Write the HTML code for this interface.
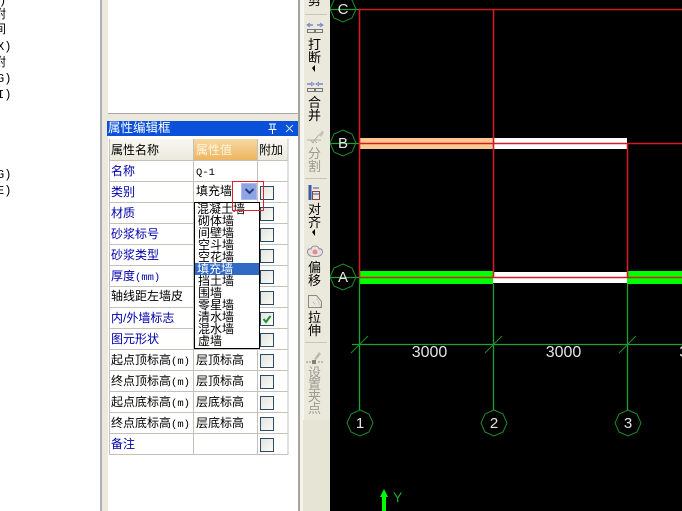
<!DOCTYPE html>
<html><head><meta charset="utf-8">
<style>
html,body{margin:0;padding:0;width:682px;height:511px;overflow:hidden;background:#fff}
*{box-sizing:border-box}
body{position:relative;font-family:"Liberation Sans","Noto Sans CJK SC",sans-serif;font-size:12px;color:#000}
div,span{position:absolute}
i{font-style:normal;font-family:"Liberation Mono",monospace;font-size:10.500px}
.lf{left:-6px;line-height:14px;white-space:nowrap;font-family:"Liberation Mono","Noto Sans CJK SC",monospace;font-size:12px}
.c{height:21px;line-height:21px;white-space:nowrap;overflow:hidden}
.n{left:111px;width:81px}
.v{left:196px;width:60px}
.b{color:#0000a8}
.k{left:260px;width:14px;height:14px;border:1.5px solid #2a4a66;background:linear-gradient(135deg,#e4e4dc,#fbfbf8)}
.tb{left:301px;width:27px;text-align:center;font-size:13px;line-height:12.5px}
.g{color:#9a9a92}
.dd{left:198px;width:60px;height:12px;line-height:12px;white-space:nowrap;font-size:12px}
</style></head><body>
<span class="lf" style="top:-6px;left:-1px">)</span>
<span class="lf" style="top:8px">附</span>
<span class="lf" style="top:23px">间</span>
<span class="lf" style="top:40px;left:-3px">X)</span>
<span class="lf" style="top:56px">附</span>
<span class="lf" style="top:72px;left:-3px">G)</span>
<span class="lf" style="top:88px;left:-3px">I)</span>
<span class="lf" style="top:168px;left:-3px">G)</span>
<span class="lf" style="top:184px;left:-3px">E)</span>

<div style="left:100px;top:0;width:2px;height:511px;background:#aab0b8"></div>
<div style="left:102px;top:0;width:198px;height:511px;background:#ece9dc"></div>
<div style="left:108px;top:0;width:190px;height:114px;background:#fff;border-bottom:1px solid #a8a8a8"></div>
<div style="left:107px;top:121px;width:191px;height:15px;background:#0a50d8"></div>
<div style="left:108px;top:120px;color:#fff;font-size:12.5px;line-height:16px;white-space:nowrap">属性编辑框</div>
<svg style="position:absolute;left:266px;top:123px" width="32" height="12"><path d="M3 1h7M5 1v5M8 1v5M2.500 6.500h8M6.500 7v4" stroke="#fff" fill="none"/><path d="M20 2l7 7M27 2l-7 7" stroke="#cfe0ff" fill="none"/></svg>
<div style="left:108px;top:136px;width:190px;height:375px;background:#fff"></div>
<div style="left:298px;top:0;width:2px;height:511px;background:#a3a3a0"></div>
<div style="left:300px;top:0;width:3px;height:511px;background:#f4f3ec"></div>

<!-- table -->
<div style="left:109px;top:139px;width:84px;height:21px;background:linear-gradient(#f8f8f2,#ebe9dc)"></div>
<div style="left:193px;top:139px;width:64px;height:21px;background:linear-gradient(#f6d9a2,#eeb560)"></div>
<div style="left:257px;top:139px;width:31px;height:21px;background:linear-gradient(#f8f8f2,#ebe9dc)"></div>
<svg style="position:absolute;left:109px;top:139px" width="180" height="316">
<g stroke="#c4c0bc" stroke-width="1" fill="none">
<path d="M0 21.500H179M0 42.500H179M0 63.500H179M0 84.500H179M0 105.500H179M0 126.500H179M0 147.500H179M0 168.500H179M0 189.500H179M0 210.500H179M0 231.500H179M0 252.500H179M0 273.500H179M0 294.500H179M0 315.500H179"/>
<path d="M.5 0V316M84.500 0V316M148.500 0V316M179 0V316"/>
</g></svg>
<div class="c n" style="top:140px">属性名称</div>
<div class="c v" style="top:140px;color:#fff6e0">属性值</div>
<div class="c" style="left:259px;top:140px">附加</div>
<div class="c n b" style="top:161px">名称</div><div class="c v" style="top:161px"><i>Q-1</i></div>
<div class="c n b" style="top:182px">类别</div><div class="c v" style="top:181px">填充墙</div>
<div class="c n b" style="top:203px">材质</div>
<div class="c n b" style="top:224px">砂浆标号</div>
<div class="c n b" style="top:245px">砂浆类型</div>
<div class="c n b" style="top:266px">厚度<i>(mm)</i></div>
<div class="c n" style="top:286px">轴线距左墙皮</div>
<div class="c n b" style="top:308px">内/外墙标志</div>
<div class="c n b" style="top:329px">图元形状</div>
<div class="c n" style="top:350px">起点顶标高<i>(m)</i></div><div class="c v" style="top:350px">层顶标高</div>
<div class="c n" style="top:371px">终点顶标高<i>(m)</i></div><div class="c v" style="top:371px">层顶标高</div>
<div class="c n" style="top:392px">起点底标高<i>(m)</i></div><div class="c v" style="top:392px">层底标高</div>
<div class="c n" style="top:413px">终点底标高<i>(m)</i></div><div class="c v" style="top:413px">层底标高</div>
<div class="c n b" style="top:434px">备注</div>
<div class="k" style="top:186px"></div><div class="k" style="top:207px"></div><div class="k" style="top:228px"></div><div class="k" style="top:249px"></div><div class="k" style="top:270px"></div><div class="k" style="top:291px"></div>
<div class="k" style="top:312px"></div><div class="k" style="top:333px"></div><div class="k" style="top:354px"></div><div class="k" style="top:375px"></div><div class="k" style="top:396px"></div><div class="k" style="top:417px"></div><div class="k" style="top:438px"></div>
<svg style="position:absolute;left:261px;top:313px" width="12" height="12"><path d="M2.500 6l2.500 3 4.500-6" stroke="#20902c" stroke-width="2" fill="none"/></svg>

<!-- combo button -->
<div style="left:241px;top:183px;width:16px;height:17px;background:#8ea4e4;border:1px solid #a9b9ea"></div>
<svg style="position:absolute;left:244px;top:187px" width="11" height="9"><path d="M1.500 2l4 4 4-4" stroke="#24407c" stroke-width="2" fill="none"/></svg>

<!-- dropdown -->
<div style="left:194px;top:202px;width:66px;height:147px;background:#fff;border:1px solid #000;overflow:hidden"></div>
<div style="left:195px;top:263px;width:64px;height:12px;background:#316ac5"></div>
<div class="dd" style="top:203px;left:197px">混凝土墙</div>
<div class="dd" style="top:215px">砌体墙</div>
<div class="dd" style="top:227px">间壁墙</div>
<div class="dd" style="top:239px">空斗墙</div>
<div class="dd" style="top:251px">空花墙</div>
<div class="dd" style="top:263px;left:197px;color:#fff">填充墙</div>
<div class="dd" style="top:275px">挡土墙</div>
<div class="dd" style="top:287px">围墙</div>
<div class="dd" style="top:299px">零星墙</div>
<div class="dd" style="top:311px">清水墙</div>
<div class="dd" style="top:323px">混水墙</div>
<div class="dd" style="top:335px">虚墙</div>
<div style="left:232px;top:181px;width:32px;height:30px;border:1px solid #e02030"></div>

<!-- toolbar -->
<div style="left:303px;top:0;width:27px;height:511px;background:#ebe9dc"></div>
<div style="left:303px;top:420px;width:27px;height:91px;background:#e6e4d4"></div>
<div style="left:303px;top:0;width:1px;height:420px;background:#f8f8f2"></div>
<div class="tb" style="top:-5px">剪</div>
<div style="left:305px;top:14px;width:22px;height:1px;background:#c8c6b8"></div>
<div class="tb" style="top:39px">打<br>断</div>
<div class="tb" style="top:97px">合<br>并</div>
<div class="tb g" style="top:148px">分<br>割</div>
<div style="left:305px;top:178px;width:22px;height:1px;background:#c8c6b8"></div>
<div class="tb" style="top:204px">对<br>齐</div>
<div class="tb" style="top:262px">偏<br>移</div>
<div class="tb" style="top:312px">拉<br>伸</div>
<div style="left:305px;top:342px;width:22px;height:1px;background:#c8c6b8"></div>
<div class="tb g" style="top:367px;line-height:12px">设<br>置<br>夹<br>点</div>
<svg style="position:absolute;left:303px;top:0" width="27" height="420">
<g fill="none">
<path d="M5 25h5M14 25h5" stroke="#7a88c8" stroke-width="1.500"/><path d="M7 23l-3 2 3 2M17 23l3 2-3 2" stroke="#7a88c8"/>
<path d="M4.500 29.500h7v3h-7zM12.500 29.500h7v3h-7z" stroke="#777"/>
<path d="M4 84h5M15 84h5" stroke="#7a88c8" stroke-width="1.500"/><path d="M8 82l3 2-3 2M16 82l-3 2 3 2" stroke="#7a88c8"/>
<path d="M4.500 88.500h7v3h-7zM12.500 88.500h7v3h-7z" stroke="#777"/>
<path d="M4 140h14M7 140l4 3M11 140l3 3M9 143l6-7 5-5" stroke="#b4b4aa"/><path d="M16 135l4-4 1 2-3 4z" fill="#c4c4ba"/>
<path d="M7 185v15" stroke="#3a5ca8" stroke-width="3"/><path d="M9.500 191.500h7v8h-7z" stroke="#884444"/><path d="M10 194h6M16 188h-6" stroke="#3a5ca8"/>
<path d="M6 255c-3-3-1-7 2-6 1-4 7-4 8 0 3-1 5 3 2 6-2 2-10 2-12 0z" stroke="#8a90a8" fill="#f4dcdc"/><circle cx="12" cy="252" r="2.500" fill="#d89090"/>
<path d="M5.500 295.500h8l5 6v6h-13z" stroke="#888"/><path d="M10 302l3 3M14 299l4 8" stroke="#a8a8a0" stroke-dasharray="1 1"/>
<path d="M3 362h5M15 362h5" stroke="#909088" stroke-dasharray="2 1"/><rect x="9" y="360" width="4" height="4" fill="#808078"/><path d="M11 359l5-7 2 2-5 6z" fill="#b8b8b0"/>
</g>
<path d="M9 68l3-3v7z" fill="#000"/>
<path d="M9 232l3-3v7z" fill="#000"/>
</svg>

<!-- canvas -->
<svg style="position:absolute;left:330px;top:0" width="352" height="511" viewBox="330 0 352 511">
<rect x="330" y="0" width="352" height="511" fill="#000"/>
<rect x="359" y="138" width="134" height="11" fill="#ffc890"/>
<rect x="493" y="138" width="134" height="11" fill="#fff"/>
<rect x="359" y="271" width="134" height="13" fill="#00ff00"/>
<rect x="493" y="272" width="134" height="11" fill="#fff"/>
<rect x="627" y="271" width="55" height="13" fill="#00ff00"/>
<g stroke="#20a030" fill="none" stroke-width="1.300">
<path d="M330 9.500H359M330 143.500H359M330 277.500H359"/>
<path d="M359.500 277V410M493.500 284V410M627.500 284V410"/>
<path d="M352 344.500H682"/>
</g>
<g stroke="#1f8a2c" fill="none" stroke-width="1">
<path d="M351 353L368 336M485 353L502 336M619 353L636 336"/>
<polygon points="343,-4 352,0 356,9 352,18 343,22 334,18 330,9 334,0"/>
<polygon points="343,130 352,134 356,143 352,152 343,156 334,152 330,143 334,134"/>
<polygon points="343,264 352,268 356,277 352,286 343,290 334,286 330,277 334,268"/>
<polygon points="360,410 369,414 373,423 369,432 360,436 351,432 347,423 351,414"/>
<polygon points="494,410 503,414 507,423 503,432 494,436 485,432 481,423 485,414"/>
<polygon points="628,410 637,414 641,423 637,432 628,436 619,432 615,423 619,414"/>
</g>
<g stroke="#d01c24" fill="none" stroke-width="1.600">
<path d="M359.500 9V277M493.500 9V277M627.500 143V277"/>
<path d="M359 9.500H682"/>
<path d="M359 143.500H682M359 277.500H682"/>
</g>
<g fill="#e4e4e4" font-family="Liberation Sans,sans-serif" font-size="16" text-anchor="middle">
<text x="429.500" y="357">3000</text>
<text x="563.500" y="357">3000</text>
<text x="697" y="357">3000</text>
</g>
<g fill="#e4e4e4" font-family="Liberation Sans,sans-serif" font-size="15" text-anchor="middle">
<text x="343" y="14">C</text>
<text x="343" y="148">B</text>
<text x="343" y="282">A</text>
<text x="360" y="428">1</text>
<text x="494" y="428">2</text>
<text x="628" y="428">3</text>
</g>
<path d="M384 489l4 8h-2v14h-4v-14h-2z" fill="#00ff00"/>
<text x="393" y="502" fill="#1fa82c" font-family="Liberation Sans,sans-serif" font-size="14">Y</text>
</svg>
</body></html>
